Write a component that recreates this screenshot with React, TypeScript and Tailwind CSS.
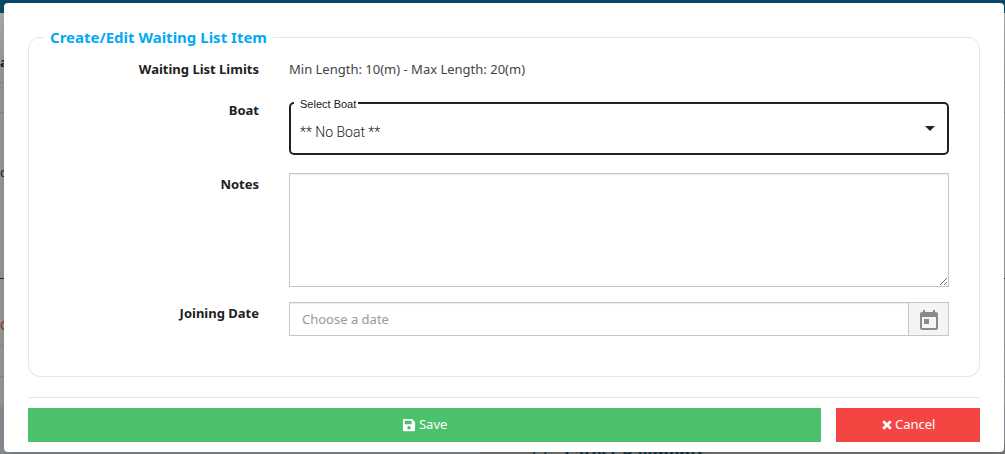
import type { ReactNode } from 'react';
import { FaSave, FaTimes } from 'react-icons/fa';
import { MdArrowDropDown, MdToday } from 'react-icons/md';

function Field({ label, htmlFor, labelTop, children }: { label: string; htmlFor?: string; labelTop?: string; children: ReactNode }) {
  const style = `px-[15px] text-right font-bold leading-5 ${labelTop ?? ''}`;
  return (
    <div className="grid grid-cols-4">
      {htmlFor ? (
        <label htmlFor={htmlFor} className={style}>{label}</label>
      ) : (
        <div className={style}>{label}</div>
      )}
      <div className="col-span-3 px-[15px]">{children}</div>
    </div>
  );
}

function PageBehind() {
  return (
    <div aria-hidden="true" className="absolute inset-0 flex flex-col overflow-hidden bg-[#969492]">
      <div className="h-[13px] shrink-0 bg-[#084a63]" />
      <div className="flex h-[70px] shrink-0 items-end border-b border-[#858585] bg-linear-to-b from-[#aaa8a6] to-[#969492] pb-2.5 font-bold">a</div>
      <div className="h-[30px] shrink-0 border-b border-[#858585]" />
      <div className="flex h-[166px] shrink-0 items-start border-b border-[#0b3a55] pt-[50px]">c</div>
      <div className="flex h-[67px] shrink-0 items-end border-b border-[#858585] pb-2.5 text-[#8c3030]">C</div>
      <div className="h-[31px] shrink-0 border-b border-[#858585]" />
      <div className="h-[31px] shrink-0 border-b border-[#7c8f94]" />
      <div className="flex grow items-start bg-[#858b90] pt-9">
        <div className="h-5 w-[480px] shrink-0" />
        <div className="grow bg-[#777] pl-[52px] text-[17px] leading-5 font-bold text-[#0b3345]">☐ – Latest Payments</div>
      </div>
    </div>
  );
}

export default function App() {
  return (
    <div className="relative min-h-screen overflow-hidden pt-[3px] pb-0.5 font-['Noto_Sans',sans-serif] text-[13px] text-[#212121]">
      <PageBehind />
      <div role="dialog" aria-label="Create/Edit Waiting List Item" className="relative mr-px ml-1 rounded bg-white px-6 pt-6 pb-2.5 shadow-lg">
        <form onSubmit={(e) => e.preventDefault()}>
          <fieldset className="min-w-0 rounded-xl border border-[#e5e5e5] px-[15px] pb-10">
            <legend className="px-1.5 text-[15px] leading-5 font-bold text-[#03a9f4]">Create/Edit Waiting List Item</legend>
            <div className="flex flex-col gap-[15px] pt-3">
              <Field label="Waiting List Limits">
                <p className="h-7 leading-5 text-[#444]">Min Length: 10(m) - Max Length: 20(m)</p>
              </Field>
              <Field label="Boat" htmlFor="boat" labelTop="-mt-0.5">
                <div className="relative mb-[3px] font-[Roboto,sans-serif]">
                  <select id="boat" className="block h-[53px] w-full appearance-none rounded-[5px] border-2 border-[#212121] bg-white px-[9px] pt-1.5 text-sm font-light text-[#212121] outline-none">
                    <option>** No Boat **</option>
                  </select>
                  <span className="absolute -top-1.5 left-[5px] bg-white pr-0.5 pl-1.5 font-['Liberation_Sans',sans-serif] text-[11px] leading-4">Select Boat</span>
                  <MdArrowDropDown className="pointer-events-none absolute top-3.5 right-[7px] size-6" />
                </div>
              </Field>
              <Field label="Notes" htmlFor="notes" labelTop="pt-px">
                <textarea id="notes" className="block h-[114px] w-full border border-[#c6c6c6] px-3 py-1.5 shadow-[inset_0_1px_1px_rgba(0,0,0,0.075)] outline-none" />
              </Field>
              <Field label="Joining Date" htmlFor="joining" labelTop="pt-px">
                <div className="flex h-[34px] border border-[#c6c6c6]">
                  <input id="joining" placeholder="Choose a date" className="min-w-0 grow px-3 pt-0.5 shadow-[inset_0_1px_1px_rgba(0,0,0,0.075)] outline-none placeholder:text-[#999]" />
                  <button type="button" aria-label="Open calendar" className="flex w-10 items-center justify-center border-l border-[#c6c6c6] bg-[#f4f4f4] pt-1 text-[#8a8a8a]">
                    <MdToday className="size-6" />
                  </button>
                </div>
              </Field>
            </div>
          </fieldset>
          <div className="mt-5 grid grid-cols-[5fr_1fr] border-t border-[#e5e5e5] pt-2.5 text-white">
            <button type="submit" className="flex h-[34px] items-center justify-center gap-[3px] bg-[#4ac16a]">
              <FaSave className="size-3.5" />
              Save
            </button>
            <button type="button" className="ml-[15px] flex h-[34px] items-center justify-center gap-0.5 bg-[#f44542]">
              <FaTimes className="size-3 stroke-white stroke-[28]" />
              Cancel
            </button>
          </div>
        </form>
      </div>
    </div>
  );
}
